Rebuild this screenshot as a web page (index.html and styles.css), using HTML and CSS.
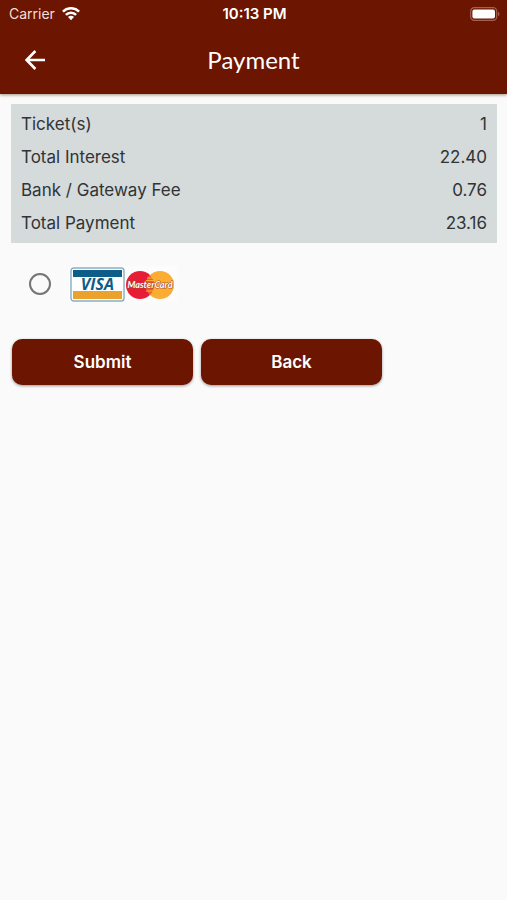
FILE: index.html
```html
<!DOCTYPE html>
<html lang="en">
<head>
<meta charset="utf-8">
<meta name="viewport" content="width=device-width, initial-scale=1">
<title>Payment</title>
<link rel="stylesheet" href="styles.css">
</head>
<body>
<header class="top">
  <div class="status">
    <span class="carrier">Carrier
      <svg class="wifi" viewBox="0 0 18 14" width="18" height="14" aria-hidden="true">
        <g fill="none" stroke="currentColor" stroke-width="2.6">
          <path d="M.9 4.6a11.5 11.5 0 0 1 16.2 0"/>
          <path d="M3.9 7.9a7.2 7.2 0 0 1 10.2 0"/>
        </g>
        <path d="M9 13.2 6 10.1a4.2 4.2 0 0 1 6 0z" fill="currentColor"/>
      </svg>
    </span>
    <span class="clock">10:13 PM</span>
    <svg class="battery" viewBox="0 0 30 14" width="30" height="14" aria-hidden="true">
      <rect x=".7" y=".7" width="26" height="12.6" rx="3.6" fill="none" stroke="#a5604f" stroke-width="1.2"/>
      <rect x="2.4" y="2.4" width="22.6" height="9.2" rx="2" fill="#fff"/>
      <path d="M28 4.8c2 .8 2 3.6 0 4.4z" fill="#a5604f"/>
    </svg>
  </div>
  <div class="bar">
    <button class="back-arrow" type="button" aria-label="Go back">
      <svg viewBox="0 0 20 20" width="20" height="20" aria-hidden="true">
        <path d="M20 10H2.4M10.4 1 1.6 10l8.8 9" fill="none" stroke="currentColor" stroke-width="2.6"/>
      </svg>
    </button>
    <h1 class="title">Payment</h1>
  </div>
</header>
<main class="content">
  <div class="summary">
    <table class="totals">
      <tr><th scope="row">Ticket(s)</th><td>1</td></tr>
      <tr><th scope="row">Total Interest</th><td>22.40</td></tr>
      <tr><th scope="row">Bank / Gateway Fee</th><td>0.76</td></tr>
      <tr><th scope="row">Total Payment</th><td>23.16</td></tr>
    </table>
  </div>
  <form class="payment">
    <div class="method">
      <input class="radio" type="radio" id="card" name="method" aria-label="Visa or MasterCard">
      <label class="cards" for="card">
        <svg viewBox="0 0 108 36" width="108" height="36" aria-hidden="true">
          <rect width="108" height="36" fill="#fcfcfc"/>
          <rect x="2" y="2" width="53" height="33" rx="2.8" fill="#fff" stroke="#86aec4" stroke-width="1.4"/>
          <path d="M4 4h49v7H4z" fill="#0e5c88"/>
          <path d="M4 25h49v8H4z" fill="#eaa22c"/>
          <text class="visa" x="28.4" y="24" text-anchor="middle">VISA</text>
          <circle cx="71" cy="19" r="14" fill="#e71d35"/>
          <circle cx="91" cy="19" r="14" fill="#fbac32"/>
          <path d="M81 9.2a14 14 0 0 1 0 19.6 14 14 0 0 1 0-19.6z" fill="#ef5a30"/>
          <path d="M78 12h6M77 14.5h8M77 25h8" stroke="#fbac32" stroke-width="1"/>
          <text class="mc" x="81" y="22.4" text-anchor="middle">MasterCard</text>
        </svg>
      </label>
    </div>
    <div class="actions">
      <button class="btn" type="submit">Submit</button>
      <button class="btn" type="button">Back</button>
    </div>
  </form>
</main>
</body>
</html>
```
FILE: styles.css
```css
* {
  box-sizing: border-box;
}

body {
  margin: 0;
  min-height: 100vh;
  background: #fafafa;
  color: #303436;
  font-family: Inter, "Liberation Sans", sans-serif;
}

.top {
  padding-bottom: 2px;
  background: #6c1500;
  color: #fff;
  box-shadow: 0 1px 3px rgba(70, 45, 10, 0.5);
}

.status {
  display: grid;
  grid-template-columns: 1fr auto 1fr;
  align-items: center;
  height: 27px;
  padding: 0 7px 0 9px;
  font-size: 14px;
}

.carrier {
  display: flex;
  align-items: center;
  gap: 7px;
  color: #f3dfda;
}

.wifi {
  color: #fff;
}

.clock {
  font-size: 15px;
  font-weight: 600;
}

.battery {
  justify-self: end;
}

.bar {
  display: grid;
  grid-template-columns: 1fr auto 1fr;
  align-items: center;
  height: 65px;
  padding: 0 16px;
}

.back-arrow {
  display: flex;
  justify-self: start;
  padding: 9px;
  border: 0;
  background: none;
  color: inherit;
}

.title {
  margin: 0;
  font-family: Lato, sans-serif;
  font-size: 24px;
  font-weight: 400;
  line-height: 30px;
}

.content {
  padding: 10px 10px 0 11px;
}

.summary {
  padding: 4px 10px 3px;
  background: #d5dadb;
}

.totals {
  width: 100%;
  border-collapse: collapse;
  font-size: 17px;
  line-height: 33px;
}

.totals th,
.totals td {
  padding: 0;
  font-weight: 400;
  text-align: left;
}

.totals td {
  text-align: right;
}

.method {
  display: flex;
  align-items: center;
  gap: 18px;
  padding: 23px 18px 0;
}

.radio {
  appearance: none;
  width: 22px;
  height: 22px;
  margin: 0;
  border: 2px solid #757575;
  border-radius: 50%;
}

.radio:checked {
  border-width: 7px;
}

.cards {
  display: flex;
}

.visa {
  fill: #0e5c88;
  font: italic 700 16px "Open Sans", sans-serif;
}

.mc {
  fill: #fff;
  stroke: #a5452c;
  stroke-width: 1px;
  paint-order: stroke;
  font: italic 700 9px "Noto Sans", Lato, sans-serif;
  font-family: Lato, sans-serif;
}

.actions {
  display: flex;
  gap: 8px;
  padding: 37px 1px 0;
}

.btn {
  flex: 0 1 181px;
  height: 46px;
  padding: 0;
  border: 0;
  border-radius: 10px;
  background: #6c1500;
  color: #fff;
  font: 600 17px Inter, "Liberation Sans", sans-serif;
  box-shadow: 0 1px 3px rgba(0, 0, 0, 0.4);
}
```
